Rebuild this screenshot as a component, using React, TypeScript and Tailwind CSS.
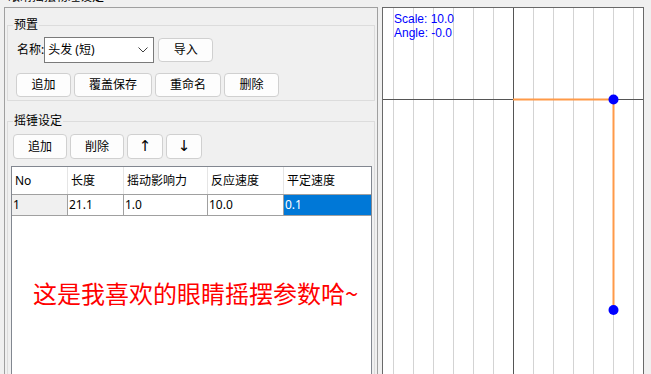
import React from 'react';

const ui = "font-['Noto_Sans','Noto_Sans_CJK_SC',sans-serif]";

function Btn({ w, children }: { w: string; children: React.ReactNode }) {
  return (
    <div
      className={`${w} h-full flex items-center justify-center rounded-[4px] border border-[#d0d0d0] bg-[#fdfdfd] text-[12px] text-black`}
    >
      {children}
    </div>
  );
}

function Group({ label, className, children }: { label: string; className: string; children: React.ReactNode }) {
  return (
    <div className={`relative border-[#dcdcdc] ${className}`}>
      <span className="absolute -top-[9px] left-[5px] px-[1px] bg-[#f0f0f0] text-[12px] leading-[16px] text-black">
        {label}
      </span>
      {children}
    </div>
  );
}

const cols = [
  { w: 'w-[56px]', head: 'No', val: '1' },
  { w: 'w-[56px]', head: '长度', val: '21.1' },
  { w: 'w-[84px]', head: '摇动影响力', val: '1.0' },
  { w: 'w-[76px]', head: '反应速度', val: '10.0' },
  { w: 'w-[87px]', head: '平定速度', val: '0.1' },
];

function Canvas() {
  const grid = Array.from({ length: 13 }, (_, i) => 10 + i * 20);
  return (
    <svg width="260" height="380" className="block">
      <rect width="260" height="380" fill="#ffffff" />
      {grid.map((x) =>
        x === 130 ? null : <line key={x} x1={x + 0.5} y1="0" x2={x + 0.5} y2="380" stroke="#d3d3d3" strokeWidth="1" />
      )}
      <line x1="130.5" y1="0" x2="130.5" y2="380" stroke="#555555" strokeWidth="1" />
      <line x1="0" y1="91.5" x2="260" y2="91.5" stroke="#555555" strokeWidth="1" />
      <polyline points="130,91.5 230.5,91.5 230.5,302" fill="none" stroke="#ff9a48" strokeWidth="2" />
      <circle cx="230.5" cy="91.5" r="5" fill="#0000ff" />
      <circle cx="230.5" cy="302" r="5" fill="#0000ff" />
      <text x="11" y="15" fontSize="12" fill="#0000ff" fontFamily="'Liberation Sans', Arial, sans-serif">Scale: 10.0</text>
      <text x="11" y="29" fontSize="12" fill="#0000ff" fontFamily="'Liberation Sans', Arial, sans-serif">Angle: -0.0</text>
    </svg>
  );
}

export default function App() {
  return (
    <div className={`w-[651px] h-[374px] overflow-hidden bg-[#f0f0f0] flex ${ui}`}>
      {/* left column */}
      <div className="ml-[4px] w-[374px] flex flex-col">
        <div className="-mt-[11px] h-[18px] pl-[4px] text-[12px] leading-[16px] text-black">眼睛摇摆物理设定</div>
        <div className="flex-1 flex flex-col border-l border-t border-r border-[#a0a0a0] px-[2px] pt-[17px]">
          <Group label="预置" className="border h-[76px] flex flex-col">
            <div className="mt-[11px] pl-[9px] h-[26px] flex items-center text-[12px]">
              <span className="text-black">名称:</span>
              <div className="w-[110px] h-[26px] flex items-center justify-between border border-[#7a7a7a] bg-white pl-[3px] pr-[5px]">
                <span>头发 (短)</span>
                <svg width="10" height="6" viewBox="0 0 10 6">
                  <polyline points="0.5,0.5 5,5 9.5,0.5" fill="none" stroke="#404040" strokeWidth="1" />
                </svg>
              </div>
              <div className="ml-[4px] h-[24px] flex">
                <Btn w="w-[55px]">导入</Btn>
              </div>
            </div>
            <div className="mt-[10px] pl-[8px] h-[24px] flex gap-[3px]">
              <Btn w="w-[55px]">追加</Btn>
              <Btn w="w-[78px]">覆盖保存</Btn>
              <Btn w="w-[66px]">重命名</Btn>
              <Btn w="w-[55px]">删除</Btn>
            </div>
          </Group>

          <Group label="摇锤设定" className="mt-[20px] border-l border-t border-r flex-1 flex flex-col">
            <div className="mt-[12px] pl-[5px] h-[25px] flex gap-[3px]">
              <Btn w="w-[54px]">追加</Btn>
              <Btn w="w-[54px]">削除</Btn>
              <Btn w="w-[36px]">
                <span className="font-['DejaVu_Sans',sans-serif] text-[15px] leading-none">{'\u2191\uFE0E'}</span>
              </Btn>
              <Btn w="w-[36px]">
                <span className="font-['DejaVu_Sans',sans-serif] text-[15px] leading-none">{'\u2193\uFE0E'}</span>
              </Btn>
            </div>
            <div className="mt-[7px] ml-[3px] w-[361px] flex-1 border-l border-t border-r border-[#828790] bg-white flex flex-col text-[12px] text-black">
              <div className="h-[27px] flex">
                {cols.map((c, i) => (
                  <div
                    key={c.head}
                    className={`${c.w} h-full flex items-center pl-[3px] ${i < 4 ? 'border-r border-[#e5e5e5]' : ''}`}
                  >
                    {c.head}
                  </div>
                ))}
              </div>
              <div className="h-[22px] flex border-t border-b border-[#a0a0a0]">
                {cols.map((c, i) => (
                  <div
                    key={c.head}
                    className={`${c.w} h-full flex items-center pl-[1px] ${i < 4 ? 'border-r border-[#a0a0a0]' : ''} ${
                      i === 0 ? 'bg-[#f0f0f0]' : i === 4 ? 'bg-[#0078d7] text-white' : ''
                    }`}
                  >
                    {c.val}
                  </div>
                ))}
              </div>
              <div className="mt-[64px] pl-[21px] text-[24px] leading-[26px] text-[#ff0000] font-['Noto_Sans_CJK_SC',sans-serif]">
                这是我喜欢的眼睛摇摆参数哈~
              </div>
            </div>
          </Group>
        </div>
      </div>

      {/* right canvas */}
      <div className="ml-[4px] mt-[7px] w-[262px] h-[380px] border border-[#696969] overflow-hidden">
        <Canvas />
      </div>
    </div>
  );
}
